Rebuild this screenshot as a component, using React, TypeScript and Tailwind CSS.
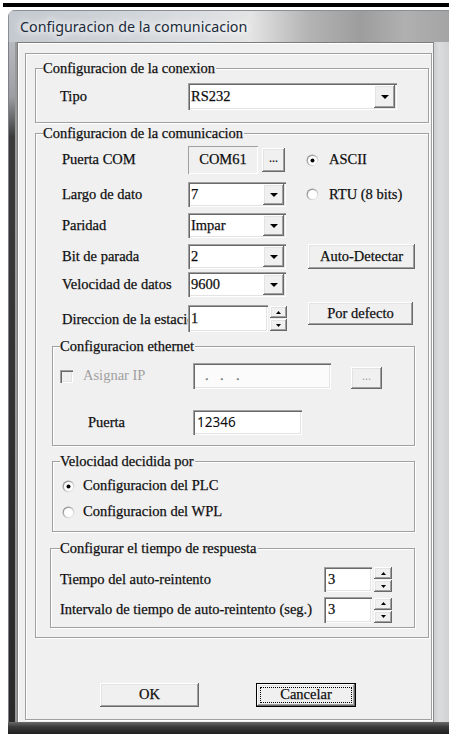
import React from "react";

// Classic Win32 3D edges
const sunken =
  "shadow-[inset_1px_1px_0_#a0a0a0,inset_2px_2px_0_#696969,inset_-1px_-1px_0_#ffffff,inset_-2px_-2px_0_#e3e3e3]";
const raised =
  "shadow-[inset_-1px_-1px_0_#696969,inset_1px_1px_0_#ffffff,inset_-2px_-2px_0_#a0a0a0,inset_2px_2px_0_#e3e3e3]";
const etched = "border border-[#a0a0a0] shadow-[inset_1px_1px_0_#ffffff,1px_1px_0_#ffffff]";

function DownArrow() {
  return (
    <svg width="8" height="4" viewBox="0 0 8 4">
      <path d="M0 0H8L4 4Z" fill="#000" />
    </svg>
  );
}

function Combo({ value, className }: { value: string; className: string }) {
  return (
    <div className={`flex bg-white p-[2px] ${sunken} ${className}`}>
      <span className="flex flex-1 items-center pl-[1px]">{value}</span>
      <span className={`flex w-[21px] items-center justify-center bg-[#f0f0f0] ${raised}`}>
        <DownArrow />
      </span>
    </div>
  );
}

function Spin({ className }: { className: string }) {
  const half = `flex flex-1 items-center justify-center bg-[#f0f0f0] ${raised}`;
  return (
    <div className={`flex flex-col gap-[1px] ${className}`}>
      <span className={half}>
        <svg width="5" height="3" viewBox="0 0 5 3">
          <path d="M0 3H5L2.5 0Z" fill="#000" />
        </svg>
      </span>
      <span className={half}>
        <svg width="5" height="3" viewBox="0 0 5 3">
          <path d="M0 0H5L2.5 3Z" fill="#000" />
        </svg>
      </span>
    </div>
  );
}

function Radio({ checked }: { checked?: boolean }) {
  return (
    <svg width="13" height="13" viewBox="0 0 13 13" className="shrink-0">
      <defs>
        <linearGradient id="rg" x1="0" y1="0" x2="1" y2="1">
          <stop offset="0" stopColor="#7a7a7a" />
          <stop offset="0.55" stopColor="#c8c8c8" />
          <stop offset="1" stopColor="#ffffff" />
        </linearGradient>
      </defs>
      <circle cx="6.5" cy="6.5" r="6" fill="url(#rg)" />
      <circle cx="6.5" cy="6.5" r="4.6" fill="#ffffff" />
      {checked && <circle cx="6.5" cy="6.5" r="2" fill="#000" />}
    </svg>
  );
}

function Button({ label, className }: { label: string; className: string }) {
  return (
    <div className={`flex items-center justify-center bg-[#f0f0f0] ${raised} ${className}`}>{label}</div>
  );
}

function Group({
  title,
  className,
  legendClass,
  children,
}: {
  title: string;
  className: string;
  legendClass: string;
  children: React.ReactNode;
}) {
  return (
    <fieldset className={`${etched} ${className}`}>
      <legend className={`bg-[#f0f0f0] pr-[1px] leading-[16px] ${legendClass}`}>{title}</legend>
      {children}
    </fieldset>
  );
}

export default function App() {
  return (
    <div className="h-[734px] w-[449px] overflow-hidden bg-white font-['Liberation_Serif',serif] text-[14.5px] text-[#0c0c0c] [-webkit-text-stroke:0.25px_#1a1a1a]">
      <div className="ml-[3px] mt-[3px] h-[4px] bg-black" />
      <div className="ml-[8px] mt-[3px] flex h-[724px] w-[441px] flex-col overflow-hidden rounded-tl-[7px] bg-[#b9bdc2]">
        {/* title bar */}
        <div className="flex h-[32px] shrink-0 items-center bg-[linear-gradient(90deg,#c3c9cf_0%,#cfd4d9_25%,#dcdfe2_45%,#e4e4e4_55%,#b4b4b4_68%,#9d9d9d_80%,#b0b0b0_90%,#a4a4a4_100%)] pl-[12px] pt-[2px] shadow-[inset_1px_1px_0_#8a8f95]">
          <span className="font-['Noto_Sans',sans-serif] text-[14.3px] text-[#1c2a3a] [-webkit-text-stroke:0px] [text-shadow:0_0_6px_#ffffff,0_0_10px_#ffffff,0_0_14px_#ffffff]">
            Configuracion de la comunicacion
          </span>
        </div>
        <div className="flex h-[680px] shrink-0">
          {/* left frame */}
          <div className="w-[9px] bg-[linear-gradient(180deg,#b7bbc0_0%,#9b9fa3_8%,#3a3a3a_14%,#2a2a2a_100%)] shadow-[inset_1px_0_0_#7c8086,inset_-2px_0_0_#9a9a9a]" />
          {/* client area */}
          <div className="w-[416px] bg-[#f0f0f0] pb-[2px] pl-[8px] pr-[1px] pt-[11px] shadow-[inset_1px_1px_0_#7d7d7d,inset_2px_2px_0_#ffffff]">
            <div className={`flex h-[667px] flex-col ${etched}`}>
              {/* connection */}
              <Group title="Configuracion de la conexion" className="ml-[9px] mt-[6px] h-[63px] w-[394px]" legendClass="ml-[7px]">
                <div className="mt-[7px] flex h-[27px] items-center">
                  <span className="ml-[24px] w-[128px]">Tipo</span>
                  <Combo value="RS232" className="h-[27px] w-[209px]" />
                </div>
              </Group>

              {/* communication */}
              <Group title="Configuracion de la comunicacion" className="ml-[9px] mt-[2px] h-[513px] w-[394px]" legendClass="ml-[7px]">
                <div className="mt-[5px] flex h-[28px] items-center">
                  <span className="ml-[26px] w-[126px]">Puerta COM</span>
                  <div className="flex h-[28px] w-[70px] items-center justify-center bg-[#f0f0f0] shadow-[inset_1px_1px_0_#a0a0a0,inset_-1px_-1px_0_#ffffff]">
                    COM61
                  </div>
                  <Button label="..." className="ml-[4px] h-[24px] w-[23px] pb-[4px] text-[12px]" />
                  <span className="ml-[21px] flex items-center gap-[10px]">
                    <Radio checked />
                    ASCII
                  </span>
                </div>
                <div className="mt-[8px] flex h-[25px] items-center">
                  <span className="ml-[26px] w-[126px]">Largo de dato</span>
                  <Combo value="7" className="h-[25px] w-[98px]" />
                  <span className="ml-[20px] flex items-center gap-[10px]">
                    <Radio />
                    RTU (8 bits)
                  </span>
                </div>
                <div className="mt-[6px] flex h-[25px] items-center">
                  <span className="ml-[26px] w-[126px]">Paridad</span>
                  <Combo value="Impar" className="h-[25px] w-[98px]" />
                </div>
                <div className="mt-[6px] flex h-[25px] items-center">
                  <span className="ml-[26px] w-[126px]">Bit de parada</span>
                  <Combo value="2" className="h-[25px] w-[98px]" />
                  <Button label="Auto-Detectar" className="ml-[22px] h-[25px] w-[107px]" />
                </div>
                <div className="mt-[3px] flex h-[25px] items-center">
                  <span className="ml-[26px] w-[126px]">Velocidad de datos</span>
                  <Combo value="9600" className="h-[25px] w-[98px]" />
                </div>
                <div className="mt-[5px] flex h-[30px] items-start">
                  <span className="ml-[26px] mt-[7px] w-[126px] overflow-hidden whitespace-nowrap">
                    Direccion de la estacion
                  </span>
                  <div className={`mt-[3px] flex h-[27px] w-[80px] items-center bg-white pl-[3px] ${sunken}`}>1</div>
                  <Spin className="ml-[2px] mt-[4px] h-[25px] w-[17px]" />
                  <Button label="Por defecto" className="ml-[21px] h-[23px] w-[105px]" />
                </div>

                {/* ethernet */}
                <Group title="Configuracion ethernet" className="ml-[16px] mt-[6px] h-[108px] w-[363px]" legendClass="ml-[7px]">
                  <div className="mt-[9px] flex h-[26px] items-center">
                    <span className={`ml-[7px] h-[13px] w-[13px] bg-[#f0f0f0] ${sunken}`} />
                    <span className="ml-[10px] w-[110px] text-[#a0a0a0] [-webkit-text-stroke:0px]">Asignar IP</span>
                    <div className={`flex h-[26px] w-[138px] items-center bg-[#fbfbfb] pl-[12px] text-[#8a8a8a] ${sunken}`}>
                      <span className="w-[15px]">.</span>
                      <span className="w-[16px]">.</span>
                      <span>.</span>
                    </div>
                    <Button label="..." className="ml-[20px] mt-[4px] h-[22px] w-[31px] pb-[4px] text-[12px] text-[#a0a0a0] [-webkit-text-stroke:0px]" />
                  </div>
                  <div className="mt-[21px] flex h-[25px] items-center">
                    <span className="ml-[35px] w-[105px]">Puerta</span>
                    <div className={`flex h-[25px] w-[109px] items-center bg-white pl-[4px] font-['Noto_Sans',sans-serif] text-[13.5px] [-webkit-text-stroke:0px] ${sunken}`}>
                      12346
                    </div>
                  </div>
                </Group>

                {/* speed source */}
                <Group title="Velocidad decidida por" className="ml-[16px] mt-[7px] h-[79px] w-[363px]" legendClass="ml-[7px]">
                  <div className="mt-[7px] flex h-[20px] items-center">
                    <span className="ml-[9px] flex items-center gap-[8px]">
                      <Radio checked />
                      Configuracion del PLC
                    </span>
                  </div>
                  <div className="mt-[6px] flex h-[20px] items-center">
                    <span className="ml-[9px] flex items-center gap-[8px]">
                      <Radio />
                      Configuracion del WPL
                    </span>
                  </div>
                </Group>

                {/* response time */}
                <Group title="Configurar el tiempo de respuesta" className="ml-[14px] mt-[8px] h-[88px] w-[365px]" legendClass="ml-[9px]">
                  <div className="mt-[11px] flex h-[25px] items-center">
                    <span className="ml-[9px] w-[264px] whitespace-nowrap">Tiempo del auto-reintento</span>
                    <div className={`flex h-[25px] w-[48px] items-center bg-white pl-[4px] ${sunken}`}>3</div>
                    <Spin className="ml-[2px] h-[25px] w-[18px]" />
                  </div>
                  <div className="mt-[5px] flex h-[26px] items-center">
                    <span className="ml-[9px] w-[264px] whitespace-nowrap">Intervalo de tiempo de auto-reintento (seg.)</span>
                    <div className={`flex h-[26px] w-[48px] items-start bg-white pl-[4px] pt-[2px] ${sunken}`}>3</div>
                    <Spin className="ml-[2px] h-[25px] w-[18px]" />
                  </div>
                </Group>
              </Group>

              {/* dialog buttons */}
              <div className="mt-[45px] flex">
                <Button label="OK" className="ml-[74px] h-[24px] w-[99px]" />
                <div className="ml-[57px] flex h-[24px] w-[100px] border border-black bg-[#f0f0f0]">
                  <div className={`flex flex-1 p-[3px] ${raised}`}>
                    <div className="flex flex-1 items-center justify-center border border-dotted border-black">
                      Cancelar
                    </div>
                  </div>
                </div>
              </div>
            </div>
          </div>
          {/* right frame */}
          <div className="flex-1 bg-[linear-gradient(90deg,#c9cbce_0%,#dadcde_40%,#cfd1d3_100%)] shadow-[inset_1px_0_0_#8a8a8a]" />
        </div>
        {/* bottom frame */}
        <div className="flex-1 bg-[linear-gradient(180deg,#6a6a6a_0%,#3a3a3a_40%,#1e1e1e_100%)]" />
      </div>
    </div>
  );
}
